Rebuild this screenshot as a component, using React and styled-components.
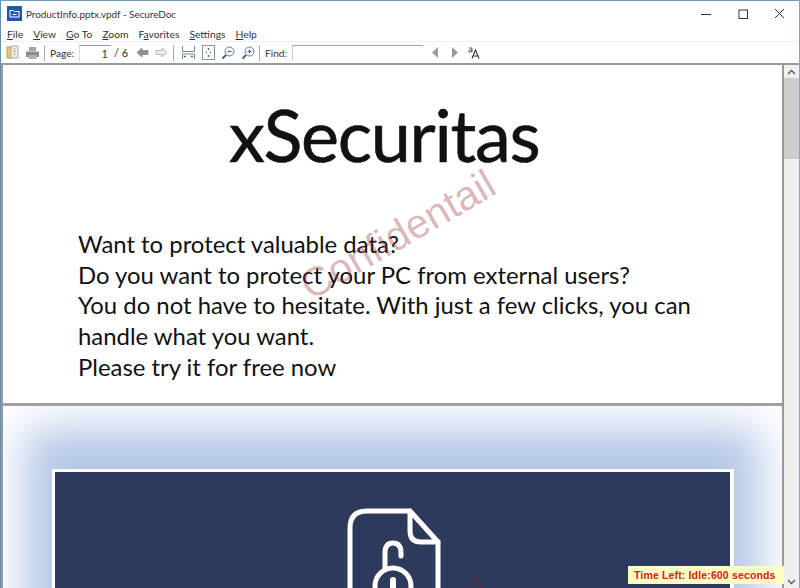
import React from 'react';
import styled, { createGlobalStyle } from 'styled-components';

const GlobalStyle = createGlobalStyle`
  html, body { margin: 0; padding: 0; background: #fff; }
  * { box-sizing: border-box; }
`;

const Win = styled.div`
  position: relative;
  width: 800px;
  height: 588px;
  overflow: hidden;
  display: flex;
  flex-direction: column;
  background: #fff;
  border-left: 1px solid #5f8fb3;
  border-right: 1px solid #7fa9c4;
  border-top: 1px solid #6f9dbb;
  font-family: Lato, "Noto Sans", sans-serif;
  color: #222;
`;
const TitleBar = styled.div`
  height: 25px;
  flex: none;
  display: flex;
  align-items: center;
  padding-left: 6px;
  gap: 4px;
  font-size: 9.9px;
  color: #333;
`;
const WinButtons = styled.div`
  margin-left: auto;
  display: flex;
  align-items: center;
  height: 100%;
  padding-right: 1px;
`;
const WinButton = styled.div`
  width: 37px;
  height: 100%;
  display: flex;
  align-items: center;
  justify-content: center;
`;
const MenuBar = styled.div`
  height: 16px;
  flex: none;
  display: flex;
  align-items: center;
  padding-left: 6px;
  gap: 10px;
  font-size: 10.3px;
  color: #333;
  border-bottom: 1px solid #f0f0f0;
  u { text-decoration-thickness: 1px; text-underline-offset: 1px; }
`;
const Toolbar = styled.div`
  height: 21px;
  flex: none;
  display: flex;
  align-items: center;
  padding-left: 5px;
  font-size: 10.2px;
  color: #333;
`;
const Sep = styled.div`
  width: 1px;
  height: 16px;
  background: #a9a9a9;
  margin: ${p => p.$margin};
`;
const Tool = styled.div`
  display: flex;
  margin-left: ${p => p.$left || 0}px;
`;
const ToolLabel = styled.span`
  width: ${p => p.$width}px;
  flex: none;
`;
const PageInput = styled.div`
  width: 32px;
  height: 16px;
  margin-left: 6px;
  padding-right: 3px;
  border-top: 1px solid #9a9a9a;
  border-left: 1px solid #d8d8d8;
  text-align: right;
  line-height: 16px;
  font-size: 11px;
`;
const PageTotal = styled.span`
  width: 12px;
  flex: none;
  margin-left: 3px;
  font-size: 11px;
  white-space: nowrap;
`;
const FindInput = styled.div`
  width: 131px;
  height: 16px;
  margin-left: 5px;
  border-top: 1px solid #a5a5a5;
  border-left: 1px solid #c8c8c8;
`;
const Viewer = styled.div`
  flex: 1;
  min-height: 0;
  display: flex;
  border-top: 2px solid #9a9a9a;
  position: relative;
  overflow: hidden;
`;
const Pages = styled.div`
  flex: 1;
  min-width: 0;
  border-left: 2px solid #9a9a9a;
  border-right: 2px solid #9a9a9a;
  overflow: hidden;
`;
const PageOne = styled.div`
  height: 341px;
  border-bottom: 3px solid #a0a0a0;
  background: #fff;
  padding: 26px 0 0 75px;
  font-family: Lato, Carlito, sans-serif;
  color: #111;
`;
const Heading = styled.h1`
  margin: 0 0 0 151px;
  font-size: 72px;
  line-height: 86px;
  font-weight: 400;
  letter-spacing: -1.3px;
  -webkit-text-stroke: 0.6px #111;
  white-space: nowrap;
`;
const Body = styled.p`
  margin: 52px 0 0;
  width: 625px;
  font-size: 23.9px;
  line-height: 30.7px;
`;
const PageTwo = styled.div`
  height: 300px;
  padding: 63px 48px 0 49px;
  background: #b3c7e5;
  box-shadow: inset 0 0 44px 22px #fff;
`;
const Slide = styled.div`
  height: 234px;
  background: #2e3a5c;
  border: 3px solid #fff;
  border-right-width: 4px;
  padding: 36px 0 0 2px;
  display: flex;
  justify-content: center;
  align-items: flex-start;
`;
const Scrollbar = styled.div`
  width: 15px;
  flex: none;
  background: #f0f0f0;
  display: flex;
  flex-direction: column;
`;
const ScrollArrow = styled.div`
  height: 13px;
  flex: none;
  display: flex;
  align-items: center;
  justify-content: center;
`;
const ScrollThumb = styled.div`
  height: 81px;
  flex: none;
  background: #cdcdcd;
`;
const ScrollTrack = styled.div`
  flex: 1;
`;
const Watermark = styled.div`
  position: absolute;
  left: ${p => p.$left}px;
  top: ${p => p.$top}px;
  font-family: "Liberation Sans", Arial, sans-serif;
  font-size: 41px;
  line-height: 44px;
  color: rgba(140, 30, 40, 0.32);
  transform: rotate(-30deg);
  transform-origin: left bottom;
  white-space: nowrap;
  pointer-events: none;
`;
const TimeLeft = styled.div`
  position: absolute;
  left: 627px;
  bottom: 4px;
  width: 156px;
  height: 18px;
  padding-left: 6px;
  background: #ffffc4;
  color: #d4211c;
  font-family: "Liberation Sans", Arial, sans-serif;
  font-size: 10.5px;
  font-weight: 700;
  line-height: 18px;
  letter-spacing: 0.15px;
  white-space: nowrap;
`;

const AppIcon = () => (
  <svg width="15" height="15" viewBox="0 0 15 15">
    <rect width="15" height="15" fill="#1f5aa8" />
    <path d="M3 4.5h3.5l1 1H12v5.5H3z" fill="none" stroke="#fff" strokeWidth="1" />
    <path d="M5.5 8.5h4" stroke="#fff" strokeWidth="1" />
  </svg>
);
const OpenIcon = () => (
  <svg width="13" height="15" viewBox="0 0 13 15">
    <path d="M1 2h6v11H1z" fill="#e9c978" stroke="#a88a3d" strokeWidth="0.8" />
    <path d="M5 1h7v12H5z" fill="#f3f1e6" stroke="#9d9d8f" strokeWidth="0.8" />
    <path d="M7 4h3M7 6.5h3M7 9h3" stroke="#b0b0a5" strokeWidth="1" />
  </svg>
);
const PrintIcon = () => (
  <svg width="15" height="14" viewBox="0 0 15 14">
    <path d="M4 1h7v4H4z" fill="#a3a3a3" />
    <path d="M1 5.5h13V11H1z" fill="#8c8c8c" />
    <path d="M3.5 9h8v4h-8z" fill="#b0b0b0" />
  </svg>
);
const ArrowIcon = ({ flip, filled }) => (
  <svg width="13" height="11" viewBox="0 0 13 11" style={{ transform: flip ? 'scaleX(-1)' : undefined }}>
    <path d="M1 5.5 6 1v2.5h6v4H6V10z" fill={filled ? '#8f8f8f' : '#ededed'} stroke={filled ? '#8a8a8a' : '#a8a8a8'} strokeWidth="0.8" />
  </svg>
);
const FitWidthIcon = () => (
  <svg width="13" height="15" viewBox="0 0 13 15" fill="none">
    <path d="M.5 1v5.5h12V1" stroke="#7b8794" />
    <path d="M.5 14V9h12v5" stroke="#7b8794" />
    <path d="M2 11.5h2M9 11.5h2" stroke="#3a6ea8" strokeWidth="1.4" />
  </svg>
);
const FitPageIcon = () => (
  <svg width="13" height="15" viewBox="0 0 13 15" fill="none">
    <rect x="0.5" y="0.5" width="12" height="14" stroke="#8a929b" />
    <path d="M6.5 3v2M6.5 10v2M4 7.5h1M8 7.5h1" stroke="#3a6ea8" strokeWidth="1.4" />
  </svg>
);
const ZoomIcon = ({ plus }) => (
  <svg width="14" height="14" viewBox="0 0 14 14" fill="none">
    <circle cx="8.5" cy="5.5" r="4.5" fill="#f4f7fb" stroke="#6d7a8a" />
    <path d="M5 9 1.5 12.5" stroke="#4f6078" strokeWidth="2" />
    <path d="M6.5 5.5h4" stroke="#2f62a0" />
    {plus && <path d="M8.5 3.5v4" stroke="#2f62a0" />}
  </svg>
);
const TriIcon = ({ right }) => (
  <svg width="8" height="11" viewBox="0 0 8 11">
    <path d={right ? 'M1 0l6 5.5L1 11z' : 'M7 0 1 5.5 7 11z'} fill="#9a9a9a" />
  </svg>
);
const CaseIcon = () => (
  <svg width="12" height="13" viewBox="0 0 12 13" fill="none">
    <path d="M1 2.5c1-1 3-1 3 .5v3M4 4C1.5 4 .5 4.5.7 5.5S3.5 6.5 4 5" stroke="#333" strokeWidth="0.9" />
    <path d="M4 12.5 7.5 4l3.5 8.5M5.3 10h4.4" stroke="#333" strokeWidth="1.1" />
  </svg>
);
const FileLockIcon = () => (
  <svg width="94" height="170" viewBox="0 0 94 170" fill="none" stroke="#fff" strokeWidth="5" strokeLinejoin="round" strokeLinecap="round">
    <path d="M63 3H20Q3 3 3 20v130q0 17 17 17h54q17 0 17-17V34z" />
    <path d="M63 3v20q0 11 11 11h17" />
    <circle cx="46" cy="78" r="18" />
    <path d="M38 60V45q0-10 8-10t8 10v3" />
    <path d="M46 72v8" strokeWidth="6" />
  </svg>
);

const menus = [
  ['', 'F', 'ile'],
  ['', 'V', 'iew'],
  ['', 'G', 'o To'],
  ['', 'Z', 'oom'],
  ['F', 'a', 'vorites'],
  ['', 'S', 'ettings'],
  ['', 'H', 'elp'],
];

export default function App() {
  return (
    <>
      <GlobalStyle />
      <Win>
        <TitleBar>
          <AppIcon />
          <span>ProductInfo.pptx.vpdf - SecureDoc</span>
          <WinButtons>
            <WinButton>
              <svg width="10" height="10" viewBox="0 0 10 10"><path d="M0 5.5h10" stroke="#333" /></svg>
            </WinButton>
            <WinButton>
              <svg width="10" height="10" viewBox="0 0 10 10"><rect x="1" y="1" width="8.5" height="8.5" fill="none" stroke="#333" /></svg>
            </WinButton>
            <WinButton>
              <svg width="11" height="11" viewBox="0 0 11 11"><path d="M1 1l9 9M10 1l-9 9" stroke="#333" /></svg>
            </WinButton>
          </WinButtons>
        </TitleBar>
        <MenuBar>
          {menus.map(([a, b, c]) => (
            <span key={b + c}>{a}<u>{b}</u>{c}</span>
          ))}
        </MenuBar>
        <Toolbar>
          <OpenIcon />
          <Tool $left={6}><PrintIcon /></Tool>
          <Sep $margin="0 5px 0 4px" />
          <ToolLabel $width={23}>Page:</ToolLabel>
          <PageInput>1</PageInput>
          <PageTotal>/ 6</PageTotal>
          <Tool $left={10}><ArrowIcon filled /></Tool>
          <Tool $left={6}><ArrowIcon flip /></Tool>
          <Sep $margin="0 8px 0 5px" />
          <FitWidthIcon />
          <Tool $left={7}><FitPageIcon /></Tool>
          <Tool $left={6}><ZoomIcon /></Tool>
          <Tool $left={6}><ZoomIcon plus /></Tool>
          <Sep $margin="0 5px 0 4px" />
          <ToolLabel $width={22}>Find:</ToolLabel>
          <FindInput />
          <Tool $left={8}><TriIcon /></Tool>
          <Tool $left={12}><TriIcon right /></Tool>
          <Tool $left={9}><CaseIcon /></Tool>
        </Toolbar>
        <Viewer>
          <Pages>
            <PageOne>
              <Heading>xSecuritas</Heading>
              <Body>
                Want to protect valuable data?<br />
                Do you want to protect your PC from external users?<br />
                You do not have to hesitate. With just a few clicks, you can handle what you want.<br />
                Please try it for free now
              </Body>
            </PageOne>
            <PageTwo>
              <Slide>
                <FileLockIcon />
              </Slide>
            </PageTwo>
          </Pages>
          <Scrollbar>
            <ScrollArrow>
              <svg width="9" height="6" viewBox="0 0 9 6"><path d="M1 5l3.5-3.5L8 5" fill="none" stroke="#555" strokeWidth="1.4" /></svg>
            </ScrollArrow>
            <ScrollThumb />
            <ScrollTrack />
            <ScrollArrow>
              <svg width="9" height="6" viewBox="0 0 9 6"><path d="M1 1l3.5 3.5L8 1" fill="none" stroke="#555" strokeWidth="1.4" /></svg>
            </ScrollArrow>
          </Scrollbar>
          <Watermark $left={314} $top={199}>Confidentail</Watermark>
          <Watermark $left={309} $top={606}>Confidentail</Watermark>
        </Viewer>
        <TimeLeft>Time Left: Idle:600 seconds</TimeLeft>
      </Win>
    </>
  );
}
